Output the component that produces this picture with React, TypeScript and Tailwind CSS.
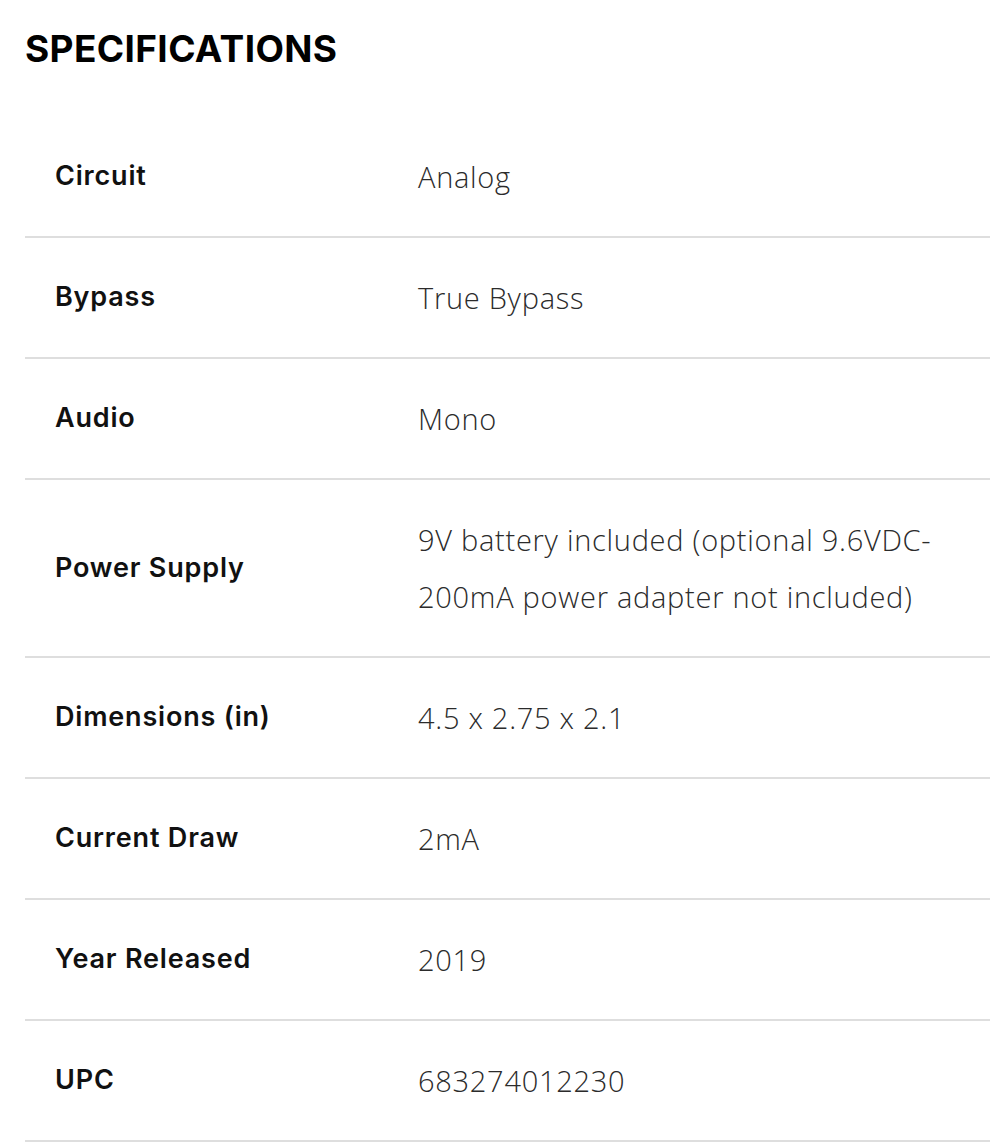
const specs: { label: string; value: React.ReactNode }[] = [
  { label: "Circuit", value: "Analog" },
  { label: "Bypass", value: "True Bypass" },
  { label: "Audio", value: "Mono" },
  {
    label: "Power Supply",
    value: (
      <>
        <span className="block">9V battery included (optional 9.6VDC-</span>
        <span className="block">200mA power adapter not included)</span>
      </>
    ),
  },
  { label: "Dimensions (in)", value: "4.5 x 2.75 x 2.1" },
  { label: "Current Draw", value: "2mA" },
  { label: "Year Released", value: "2019" },
  { label: "UPC", value: "683274012230" },
];

export default function App() {
  return (
    <div className="min-h-[1143px] bg-white pl-[25px] pr-[10px] pt-[27px] font-['Inter','Liberation_Sans',sans-serif]">
      <h2 className="text-[37px] leading-[44px] font-bold tracking-[0.01em] text-black">
        SPECIFICATIONS
      </h2>

      <div className="mt-[46px]">
        {specs.map((row) => (
          <div
            key={row.label}
            className="flex items-center border-b-2 border-[#dedede] py-[31px]"
          >
            <div className="w-[393px] shrink-0 pl-[30px] text-[27px] font-semibold tracking-[0.03em] text-[#111]">
              {row.label}
            </div>
            <div className="flex-1 text-[29px] leading-[57px] font-light tracking-[0.025em] text-[#2b2b2b] font-['Open_Sans','Liberation_Sans',sans-serif]">
              {row.value}
            </div>
          </div>
        ))}
      </div>
    </div>
  );
}
